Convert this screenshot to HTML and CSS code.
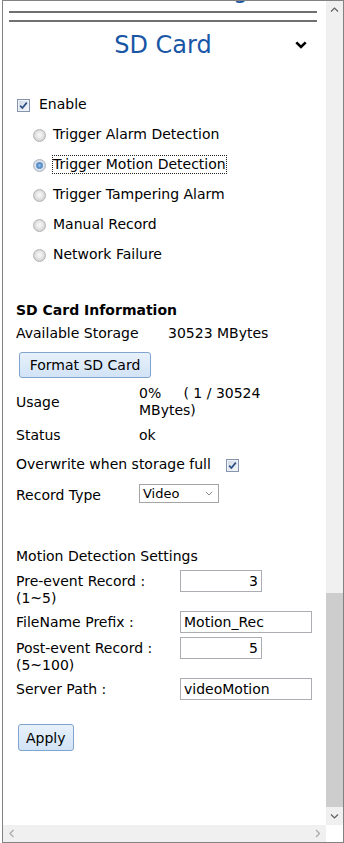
FILE: index.html
```html
<!DOCTYPE html>
<html>
<head>
<meta charset="utf-8">
<title>SD Card</title>
<link rel="stylesheet" href="styles.css">
</head>
<body>
<div class="frame">
  <div class="viewport">
    <div class="content">
      <div class="clip"><div class="prev-title">Event Setting</div></div>
      <div class="rules"></div>
      <div class="title-row">
        <span></span>
        <h2 class="title">SD Card</h2>
        <svg class="chev" width="12" height="8" viewBox="0 0 12 8"><path d="M1.3 1.3 L6 6 L10.7 1.3" fill="none" stroke="#000" stroke-width="2.6"/></svg>
      </div>
      <div class="options">
        <label class="opt check-opt"><span class="cb"><svg width="11" height="11" viewBox="0 0 11 11"><path d="M2.2 5.6 L4.4 8 L8.8 2.6" fill="none" stroke="#2d4f86" stroke-width="1.7"/></svg></span>Enable</label>
        <label class="opt radio-opt"><span class="rb"></span>Trigger Alarm Detection</label>
        <label class="opt radio-opt"><span class="rb on"></span><span class="focus">Trigger Motion Detection</span></label>
        <label class="opt radio-opt"><span class="rb"></span>Trigger Tampering Alarm</label>
        <label class="opt radio-opt"><span class="rb"></span>Manual Record</label>
        <label class="opt radio-opt"><span class="rb"></span>Network Failure</label>
      </div>
      <div class="info">
        <div class="info-title">SD Card Information</div>
        <div class="avail"><span class="avail-label">Available Storage</span><span>30523 MBytes</span></div>
        <button class="btn fmt">Format SD Card</button>
        <div class="kv usage"><span class="k">Usage</span><span class="v">0%&nbsp;&nbsp;&nbsp;&nbsp; ( 1 / 30524<br>MBytes)</span></div>
        <div class="kv status"><span class="k">Status</span><span class="v">ok</span></div>
        <div class="kv overwrite"><span class="v">Overwrite when storage full</span><span class="cb"><svg width="11" height="11" viewBox="0 0 11 11"><path d="M2.2 5.6 L4.4 8 L8.8 2.6" fill="none" stroke="#2d4f86" stroke-width="1.7"/></svg></span></div>
        <div class="kv rtype"><span class="k">Record Type</span><div class="select"><span>Video</span><svg width="8" height="5" viewBox="0 0 8 5"><path d="M0.8 0.8 L4 4 L7.2 0.8" fill="none" stroke="#8a8a8a" stroke-width="1"/></svg></div></div>
      </div>
      <div class="motion">
        <div class="motion-title">Motion Detection Settings</div>
        <div class="field"><span class="fl">Pre-event Record :<br>(1~5)</span><input class="in short num" value="3"></div>
        <div class="field"><span class="fl">FileName Prefix :</span><input class="in long" value="Motion_Rec"></div>
        <div class="field"><span class="fl">Post-event Record :<br>(5~100)</span><input class="in short num" value="5"></div>
        <div class="field"><span class="fl">Server Path :</span><input class="in long" value="videoMotion"></div>
      </div>
      <button class="btn apply">Apply</button>
    </div>
  </div>
  <div class="vbar">
    <svg class="arr" width="17" height="17" viewBox="0 0 17 17"><path d="M5 10.5 L8.5 7 L12 10.5" fill="none" stroke="#606060" stroke-width="1.2"/></svg>
    <div class="vspace"></div>
    <div class="thumb"></div>
    <svg class="arr" width="17" height="17" viewBox="0 0 17 17"><path d="M5 6.5 L8.5 10 L12 6.5" fill="none" stroke="#606060" stroke-width="1.2"/></svg>
  </div>
  <div class="hbar">
    <svg class="arr" width="17" height="17" viewBox="0 0 17 17"><path d="M10.5 5 L7 8.5 L10.5 12" fill="none" stroke="#a8a8a8" stroke-width="1.2"/></svg>
    <svg class="arr" width="17" height="17" viewBox="0 0 17 17"><path d="M7 5 L10.5 8.5 L7 12" fill="none" stroke="#a8a8a8" stroke-width="1.2"/></svg>
  </div>
  <div class="corner"></div>
</div>
</body>
</html>
```
FILE: styles.css
```css
body {
  margin: 0;
  padding-left: 2px;
  font-family: "DejaVu Sans", sans-serif;
  font-size: 14px;
  color: #000;
  background: #fff;
}
.frame {
  width: 342px;
  height: 843px;
  box-sizing: border-box;
  border: 1px solid #828282;
  display: grid;
  grid-template-columns: 323px 17px;
  grid-template-rows: 824px 17px;
}
.viewport { overflow: hidden; }
.content { padding: 0 9px 0 6px; }
.clip { height: 10px; overflow: hidden; }
.prev-title {
  margin-top: -26px;
  font-size: 24px;
  line-height: 30px;
  text-align: center;
  color: #1a56a6;
  padding-left: 8px;
}
.rules {
  height: 7px;
  border-top: 2px solid #707070;
  border-bottom: 2px solid #707070;
}
.title-row {
  margin-top: 8px;
  height: 30px;
  display: grid;
  grid-template-columns: 1fr auto 1fr;
  align-items: center;
}
.title {
  margin: 0;
  font-size: 24px;
  line-height: 30px;
  font-weight: normal;
  color: #1a56a6;
}
.chev { justify-self: end; margin-right: 10px; display: block; }
.options { margin-top: 29px; }
.opt { display: flex; align-items: center; height: 30px; }
.check-opt { padding-left: 8px; }
.radio-opt { padding-left: 24px; }
.cb {
  width: 13px;
  height: 13px;
  box-sizing: border-box;
  border: 1px solid #8595b0;
  background: linear-gradient(135deg, #cfd7e4, #f6f8fb);
  box-shadow: inset 0 0 0 1px #eef1f6;
  margin-right: 9px;
  margin-top: 3px;
  display: flex;
  align-items: center;
  justify-content: center;
  flex: none;
}
.cb svg { display: block; }
.rb {
  width: 13px;
  height: 13px;
  box-sizing: border-box;
  border-radius: 50%;
  border: 1px solid #b3b3b3;
  background: radial-gradient(circle at 50% 45%, #f7f7f7 0, #f0f0f0 2px, #d6d6d6 5.5px);
  margin-right: 7px;
  margin-top: 3px;
  flex: none;
}
.rb.on {
  border-color: #a9b3c0;
  background: radial-gradient(circle at 50% 50%, #9cc3ea 0, #4d86c4 2.6px, #7ea7d1 3.4px, #e3e8ee 4px, #d3d8de 5.5px);
}
.focus { outline: 1px dotted #222; line-height: 17px; display: inline-block; }
.info { margin-top: 30px; padding-left: 7px; }
.info-title { font-weight: bold; line-height: 23px; }
.avail { display: flex; line-height: 23px; }
.avail-label { width: 152px; }
.btn {
  display: block;
  font-family: "DejaVu Sans", sans-serif;
  font-size: 14px;
  color: #000;
  height: 26px;
  padding: 0 9px;
  border: 1px solid #7ea4cf;
  border-radius: 3px;
  background: linear-gradient(#e8f1fb, #d1e3f6);
}
.fmt { margin: 7px 0 0 3px; width: 132px; }
.kv { display: flex; align-items: center; }
.k { width: 123px; line-height: 17px; flex: none; }
.v { line-height: 17px; }
.usage { margin-top: 3px; height: 42px; }
.status { height: 24px; }
.overwrite { height: 34px; }
.overwrite .cb { margin-left: 15px; margin-right: 0; margin-top: 2px; }
.rtype { height: 28px; }
.select {
  width: 80px;
  height: 19px;
  box-sizing: border-box;
  border: 1px solid #a5a5a5;
  font-size: 13px;
  line-height: 17px;
  padding: 0 5px 0 3px;
  display: flex;
  justify-content: space-between;
  align-items: center;
  margin-top: -3px;
}
.select svg { display: block; }
.motion { margin-top: 37px; padding-left: 7px; }
.motion-title { line-height: 20px; }
.field { display: flex; align-items: baseline; margin-top: 4px; }
.fl { width: 164px; line-height: 17px; flex: none; }
.in {
  height: 22px;
  box-sizing: border-box;
  border: 1px solid #abadb3;
  padding: 0 3px;
  margin: 0;
  font-family: "DejaVu Sans", sans-serif;
  font-size: 14px;
  line-height: 20px;
  color: #000;
  background: #fff;
}
.short { width: 82px; }
.long { width: 132px; }
.num { text-align: right; }
.apply { margin: 24px 0 0 9px; height: 27px; padding: 0 7px; }
.vbar { background: #f0f0f0; display: flex; flex-direction: column; }
.arr { display: block; flex: none; }
.vspace { flex: 1; }
.thumb { height: 214px; background: #cdcdcd; margin-bottom: 1px; flex: none; }
.hbar { background: #f0f0f0; display: flex; justify-content: space-between; }
.corner { background: #fff; }
```
